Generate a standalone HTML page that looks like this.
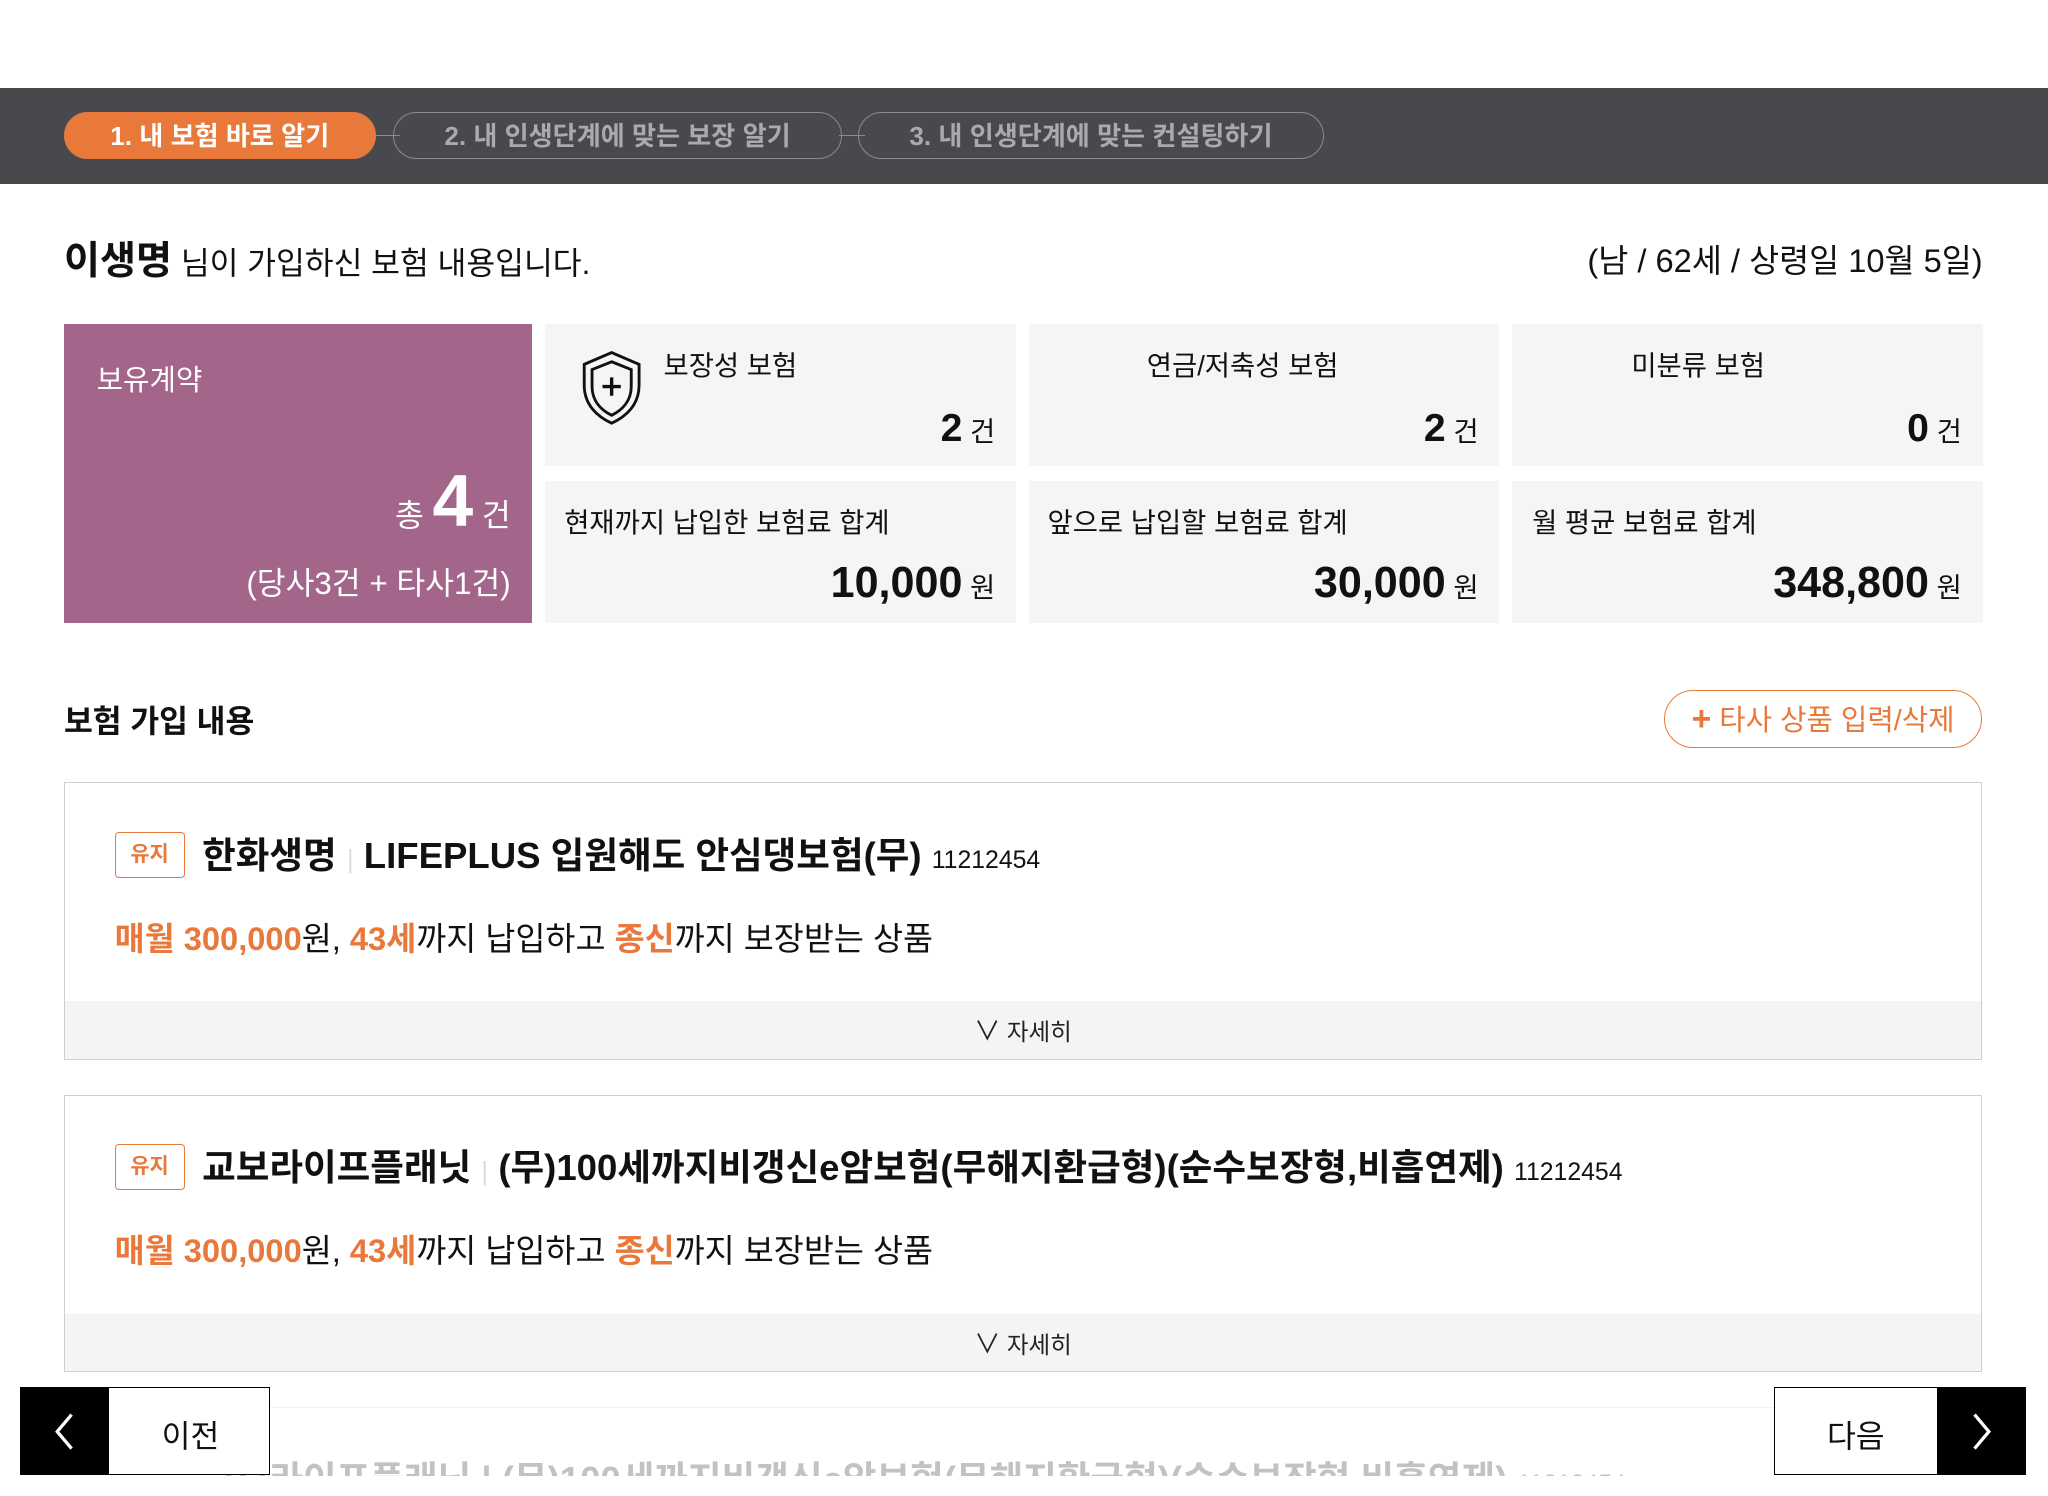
<!DOCTYPE html>
<html><head><meta charset="utf-8"><style>
html,body{margin:0;padding:0;background:#fff;overflow:hidden}
body{width:2048px;height:1496px}
#w{position:relative;width:1568px;height:1144px;overflow:hidden;zoom:1.30612;font-family:"Liberation Sans","Noto Sans CJK KR",sans-serif;color:#111}
.a{position:absolute;white-space:nowrap}
.bar{left:0;top:67px;width:1568px;height:74px;background:#48494d}
.tab{position:absolute;top:86px;height:34px;border:1.5px solid #8a8b8f;border-radius:18px;color:#a9aaae;font-weight:bold;font-size:20px;line-height:36px;text-align:center}
.cell{position:absolute;background:#f5f5f5}
.o{color:#e8793a}
.card{position:absolute;left:49px;width:1467px;height:211px;border:1px solid #cfcfcf;background:#fff}
.badge{position:absolute;left:38px;top:37px;width:52px;height:34px;border:1.5px solid #e8793a;border-radius:3px;color:#e8793a;font-size:16px;font-weight:bold;text-align:center;line-height:34px}
.det{position:absolute;left:0;bottom:0;width:100%;height:44px;background:#f4f4f4;text-align:center;font-size:18px;line-height:46px;color:#222}
</style></head><body><div id="w">
<div class="a bar"></div>
<div style="position:absolute;left:286px;top:103px;width:20px;height:1.5px;background:#8a8b8f"></div>
<div style="position:absolute;left:642px;top:103px;width:20px;height:1.5px;background:#8a8b8f"></div>
<div class="tab" style="left:49px;width:237px;background:#e8793a;border-color:#e8793a;color:#fff">1. 내 보험 바로 알기</div>
<div class="tab" style="left:301px;width:342px">2. 내 인생단계에 맞는 보장 알기</div>
<div class="tab" style="left:657px;width:355px">3. 내 인생단계에 맞는 컨설팅하기</div>

<div class="a" style="left:49px;top:176px;font-size:24px"><b style="font-size:30px">이생명</b> 님이 가입하신 보험 내용입니다.</div>
<div class="a" style="right:50px;top:180px;font-size:25px">(남 / 62세 / 상령일 10월 5일)</div>

<div class="a" style="left:49px;top:248px;width:358px;height:229px;background:#a3658a;color:#fff">
 <div class="a" style="left:25px;top:26px;font-size:22px">보유계약</div>
 <div class="a" style="right:16px;top:104px;font-size:24px">총 <b style="font-size:56px">4</b> 건</div>
 <div class="a" style="right:16px;top:180px;font-size:24px">(당사3건 + 타사1건)</div>
</div>

<div class="cell" style="left:417px;top:248px;width:361px;height:109px">
 <svg class="a" style="left:26px;top:20px" width="50" height="58" viewBox="0 0 50 58" fill="none" stroke="#111" stroke-width="2.2"><path d="M25 2 L46 11 V27 C46 42 36 51 25 56 C14 51 4 42 4 27 V11 Z"/><path d="M25 9 L40 15 V28 C40 39 33 46 25 50 C17 46 10 39 10 28 V15 Z"/><path d="M25 21 V35 M18 28 H32" stroke-width="2.6"/></svg>
 <div class="a" style="left:91px;top:15px;font-size:21px">보장성 보험</div>
 <div class="a" style="right:16px;top:64px;font-size:21px"><b style="font-size:30px">2</b> 건</div>
</div>
<div class="cell" style="left:788px;top:248px;width:360px;height:109px">
 <div class="a" style="left:90px;top:15px;font-size:21px">연금/저축성 보험</div>
 <div class="a" style="right:16px;top:64px;font-size:21px"><b style="font-size:30px">2</b> 건</div>
</div>
<div class="cell" style="left:1158px;top:248px;width:360px;height:109px">
 <div class="a" style="left:91px;top:15px;font-size:21px">미분류 보험</div>
 <div class="a" style="right:16px;top:64px;font-size:21px"><b style="font-size:30px">0</b> 건</div>
</div>
<div class="cell" style="left:417px;top:368px;width:361px;height:109px">
 <div class="a" style="left:15px;top:15px;font-size:21px">현재까지 납입한 보험료 합계</div>
 <div class="a" style="right:16px;top:60px;font-size:21px"><b style="font-size:33px">10,000</b> 원</div>
</div>
<div class="cell" style="left:788px;top:368px;width:360px;height:109px">
 <div class="a" style="left:14px;top:15px;font-size:21px">앞으로 납입할 보험료 합계</div>
 <div class="a" style="right:16px;top:60px;font-size:21px"><b style="font-size:33px">30,000</b> 원</div>
</div>
<div class="cell" style="left:1158px;top:368px;width:360px;height:109px">
 <div class="a" style="left:15px;top:15px;font-size:21px">월 평균 보험료 합계</div>
 <div class="a" style="right:16px;top:60px;font-size:21px"><b style="font-size:33px">348,800</b> 원</div>
</div>

<div class="a" style="left:49px;top:534px;font-size:24px;font-weight:bold">보험 가입 내용</div>
<div class="a o" style="left:1274px;top:528px;width:242px;height:43px;border:1.5px solid #e8793a;border-radius:23px;font-size:22px;line-height:43px;text-align:center"><b style="font-size:26px">+</b> 타사 상품 입력/삭제</div>

<div class="card" style="top:599px">
 <div class="badge">유지</div>
 <div class="a" style="left:105px;top:37px;font-size:28px;font-weight:bold;line-height:36px">한화생명 <span style="color:#ddd;font-weight:normal;font-size:20px">|</span> LIFEPLUS 입원해도 안심댕보험(무) <span style="font-weight:normal;font-size:19px">11212454</span></div>
 <div class="a" style="left:38px;top:99px;font-size:25px"><b class="o">매월 300,000</b>원, <b class="o">43세</b>까지 납입하고 <b class="o">종신</b>까지 보장받는 상품</div>
 <div class="det"><span style="font-size:20px">∨</span> 자세히</div>
</div>
<div class="card" style="top:838px">
 <div class="badge">유지</div>
 <div class="a" style="left:105px;top:37px;font-size:28px;font-weight:bold;line-height:36px">교보라이프플래닛 <span style="color:#ddd;font-weight:normal;font-size:20px">|</span> (무)100세까지비갱신e암보험(무해지환급형)(순수보장형,비흡연제) <span style="font-weight:normal;font-size:19px">11212454</span></div>
 <div class="a" style="left:38px;top:99px;font-size:25px"><b class="o">매월 300,000</b>원, <b class="o">43세</b>까지 납입하고 <b class="o">종신</b>까지 보장받는 상품</div>
 <div class="det"><span style="font-size:20px">∨</span> 자세히</div>
</div>
<div class="card" style="top:1077px;opacity:.25">
 <div class="a" style="left:105px;top:37px;font-size:28px;font-weight:bold;line-height:36px">교보라이프플래닛 | (무)100세까지비갱신e암보험(무해지환급형)(순수보장형,비흡연제) <span style="font-weight:normal;font-size:19px">11212454</span></div>
</div>
<div class="a" style="left:0;top:1130px;width:1568px;height:20px;background:#fff"></div>

<div class="a" style="left:15px;top:1062px;width:190px;height:66px;border:1.5px solid #000;background:#fff">
 <div class="a" style="left:0;top:0;width:68px;height:66px;background:#000"></div>
 <svg class="a" style="left:24px;top:18px" width="20" height="30" viewBox="0 0 20 30"><path d="M15 2 L4 15 L15 28" stroke="#fff" stroke-width="2.5" fill="none"/></svg>
 <div class="a" style="left:108px;top:18px;font-size:24px">이전</div>
</div>
<div class="a" style="left:1358px;top:1062px;width:192px;height:66px;border:1.5px solid #000;background:#fff">
 <div class="a" style="right:0;top:0;width:68px;height:66px;background:#000"></div>
 <svg class="a" style="right:24px;top:18px" width="20" height="30" viewBox="0 0 20 30"><path d="M5 2 L16 15 L5 28" stroke="#fff" stroke-width="2.5" fill="none"/></svg>
 <div class="a" style="left:40px;top:18px;font-size:24px">다음</div>
</div>
</div></body></html>
